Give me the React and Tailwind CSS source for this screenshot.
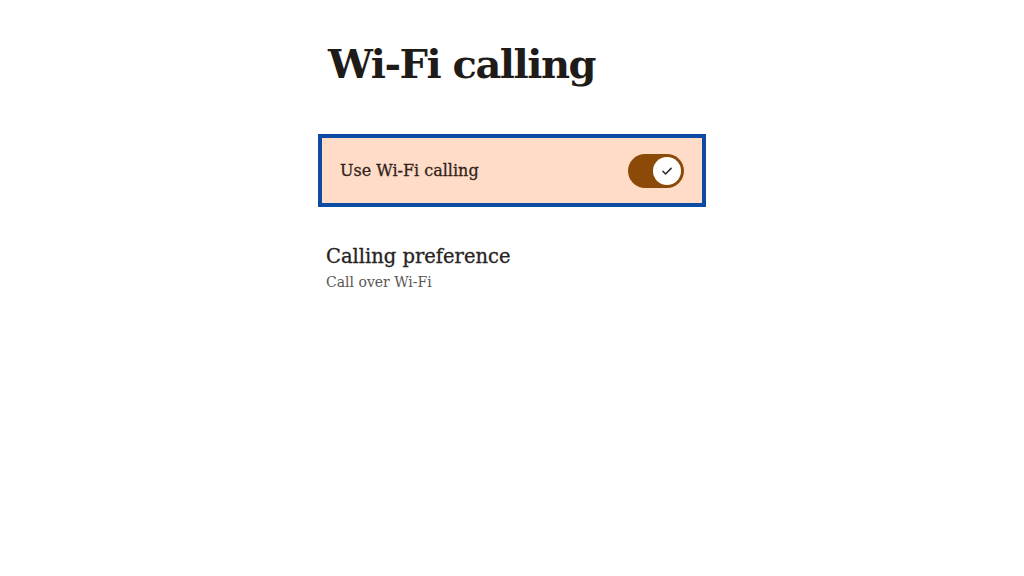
import React from "react";

export default function App() {
  return (
    <div className="w-[1024px] h-[576px] bg-white flex justify-center" style={{ fontFamily: '"DejaVu Serif", "Liberation Serif", serif' }}>
      <div className="w-[388px] flex flex-col pt-[36px]">
        <h1 className="ml-[10px] text-[40px] leading-[56px] font-bold text-[#1e1b18] tracking-[-1.5px]">Wi-Fi calling</h1>
        <div className="mt-[42px] h-[73px] border-[4px] border-[#0d4ba3] bg-[#ffdcc8] flex items-center justify-between pl-[18px] pr-[18px]">
          <span className="text-[16px] text-[#33231a] [-webkit-text-stroke:0.3px_#33231a]">Use Wi-Fi calling</span>
          <div className="w-[56px] h-[34px] rounded-full bg-[#8b4a08] flex items-center justify-end pr-[3px]">
            <div className="w-[28px] h-[28px] rounded-full bg-white flex items-center justify-center">
              <svg width="14" height="14" viewBox="0 0 24 24" fill="none" stroke="#2b2b2b" strokeWidth="2.6" strokeLinecap="round" strokeLinejoin="round">
                <path d="M5 12.5l4.5 4.5L19 7.5" />
              </svg>
            </div>
          </div>
        </div>
        <div className="ml-[8px] mt-[37px] flex flex-col">
          <span className="text-[19.5px] leading-[26px] text-[#262322] [-webkit-text-stroke:0.3px_#262322]">Calling preference</span>
          <span className="mt-[2px] text-[14px] leading-[20px] text-[#5a5654]">Call over Wi-Fi</span>
        </div>
      </div>
    </div>
  );
}
